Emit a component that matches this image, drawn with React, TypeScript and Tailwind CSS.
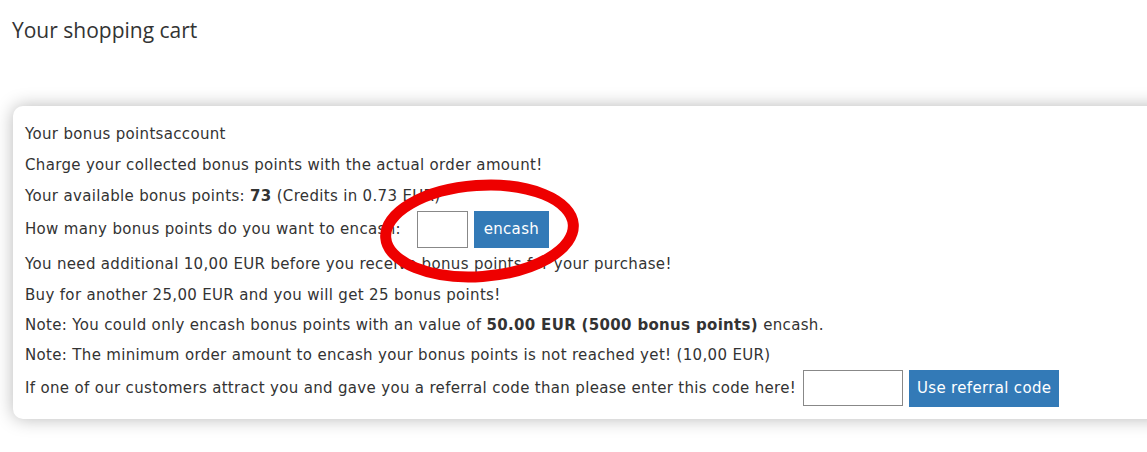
import React from "react";

export default function App() {
  const font = { fontFamily: '"DejaVu Sans", sans-serif' };
  return (
    <div className="relative w-[1147px] h-[452px] overflow-hidden bg-white text-[#333]" style={font}>
      <h1 className="pl-[12px] pt-[15px] text-[21px] leading-[30px] text-[#333]" style={{ fontFamily: '"Open Sans", sans-serif' }}>Your shopping cart</h1>
      <div className="ml-[13px] mt-[61px] w-[1160px] rounded-[10px] bg-white pl-[12px] pt-[18px] pb-[13px] shadow-[0_0_18px_rgba(0,0,0,0.28)] text-[15px] leading-[20px] tracking-[0.33px]">
        <div className="flex flex-col gap-[11px]">
          <div>Your bonus pointsaccount</div>
          <div>Charge your collected bonus points with the actual order amount!</div>
          <div>
            Your available bonus points: <b className="font-bold">73</b> (Credits in 0.73 EUR)
          </div>
          <div className="flex items-center h-[28px] -mt-[2px]">
            <span>How many bonus points do you want to encash:</span>
            <input className="ml-[16px] h-[37px] w-[51px] border border-[#888] bg-white" />
            <button className="ml-[6px] h-[37px] w-[75px] bg-[#337ab7] text-white text-[15px] tracking-[0.33px]">encash</button>
          </div>
          <div>You need additional 10,00 EUR before you receive bonus points for your purchase!</div>
          <div>Buy for another 25,00 EUR and you will get 25 bonus points!</div>
          <div className="-mt-[1px]">
            Note: You could only encash bonus points with an value of{" "}
            <b className="font-bold">50.00 EUR (5000 bonus points)</b> encash.
          </div>
          <div className="-mt-[1px]">Note: The minimum order amount to encash your bonus points is not reached yet! (10,00 EUR)</div>
          <div className="flex items-center h-[36px] -mt-[6px]">
            <span>If one of our customers attract you and gave you a referral code than please enter this code here!</span>
            <input className="ml-[7px] h-[36px] w-[100px] border border-[#888] bg-white" />
            <button className="ml-[6px] h-[37px] w-[150px] bg-[#337ab7] text-white text-[15px] tracking-[0.33px]">Use referral code</button>
          </div>
        </div>
      </div>
      <svg className="absolute left-[377px] top-[178px] pointer-events-none" width="206" height="106" viewBox="0 0 206 106">
        <ellipse cx="102.5" cy="53" rx="94" ry="45.5" transform="rotate(-4 102.5 53)" fill="none" stroke="#ee0000" strokeWidth="11" />
      </svg>
    </div>
  );
}
